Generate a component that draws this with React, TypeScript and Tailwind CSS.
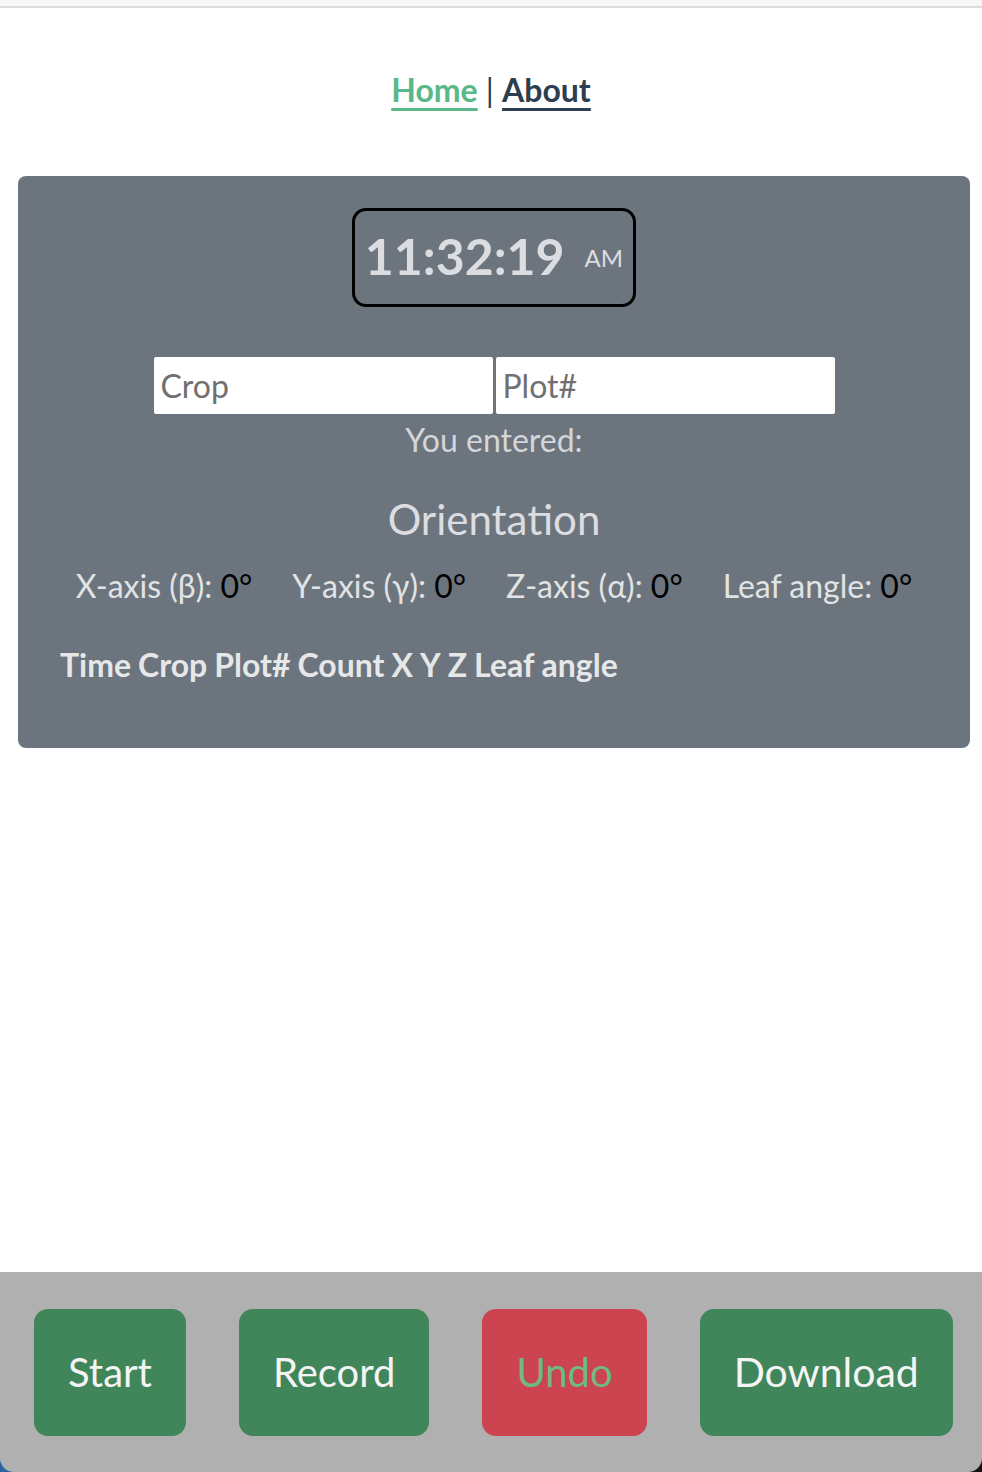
export default function App() {
  const font = { fontFamily: 'Lato, "Noto Sans", "Liberation Sans", sans-serif' };
  return (
    <div className="min-h-[1472px] bg-white flex flex-col" style={font}>
      <div className="h-[6px] bg-[#f7f7f7]" />
      <div className="h-[2px] bg-[#dddddd]" />
      <nav className="pt-[62px] pb-[66px] text-center text-[32px] leading-[40px] font-bold text-[#2c3e50]">
        <a className="underline decoration-[3px] underline-offset-[6px] text-[#58b888]">Home</a>
        <span className="font-normal"> | </span>
        <a className="underline decoration-[3px] underline-offset-[6px] text-[#2c3e50]">About</a>
      </nav>
      <div className="ml-[18px] mr-[12px] h-[572px] rounded-[8px] bg-[#6c757d] flex flex-col items-center pt-[32px]">
        <div className="w-[284px] h-[99px] rounded-[14px] border-[3px] border-black flex items-center justify-center gap-[20px] text-[#dcdde0]">
          <span className="text-[50px] leading-none font-bold mb-[4px]">11:32:19</span>
          <span className="text-[24px] leading-none">AM</span>
        </div>
        <div className="mt-[50px] flex gap-[3px]">
          <input
            placeholder="Crop"
            className="w-[339px] h-[57px] bg-white rounded-[2px] px-[7px] text-[32px] text-[#333] placeholder:text-[#707070] outline-none"
          />
          <input
            placeholder="Plot#"
            className="w-[339px] h-[57px] bg-white rounded-[2px] px-[7px] text-[32px] text-[#333] placeholder:text-[#707070] outline-none"
          />
        </div>
        <div className="mt-[6px] text-[32px] leading-[40px] text-[#d4d6d9]">You entered:</div>
        <div className="mt-[34px] text-[42px] leading-[50px] text-[#dcdde0]">Orientation</div>
        <div className="mt-[22px] flex gap-[40px] text-[32px] leading-[40px] text-[#e2e3e5]">
          <span>X-axis (β): <span className="text-black">0°</span></span>
          <span>Y-axis (γ): <span className="text-black">0°</span></span>
          <span>Z-axis (α): <span className="text-black">0°</span></span>
          <span>Leaf angle: <span className="text-black">0°</span></span>
        </div>
        <div className="self-start ml-[42px] mt-[39px] flex gap-[7px] text-[32px] leading-[40px] font-bold text-[#e6e7e9]">
          <span>Time</span>
          <span>Crop</span>
          <span>Plot#</span>
          <span>Count</span>
          <span>X</span>
          <span>Y</span>
          <span>Z</span>
          <span>Leaf angle</span>
        </div>
      </div>
      <div className="flex-1" />
      <div className="bg-gradient-to-r from-[#2a64a0] via-[#b0b0b0] to-[#111111]">
        <div className="h-[200px] bg-[#b0b0b0] rounded-b-[14px] flex items-center pl-[34px] gap-[53px]">
          <button className="h-[127px] px-[34px] rounded-[14px] bg-[#41855a] text-[40px] text-[#f4f4f4]">Start</button>
          <button className="h-[127px] px-[34px] rounded-[14px] bg-[#41855a] text-[40px] text-[#f4f4f4]">Record</button>
          <button className="h-[127px] px-[34px] rounded-[14px] bg-[#cb444f] text-[40px] text-[#6dbb83]">Undo</button>
          <button className="h-[127px] px-[34px] rounded-[14px] bg-[#41855a] text-[41px] text-[#f4f4f4]">Download</button>
        </div>
      </div>
    </div>
  );
}
